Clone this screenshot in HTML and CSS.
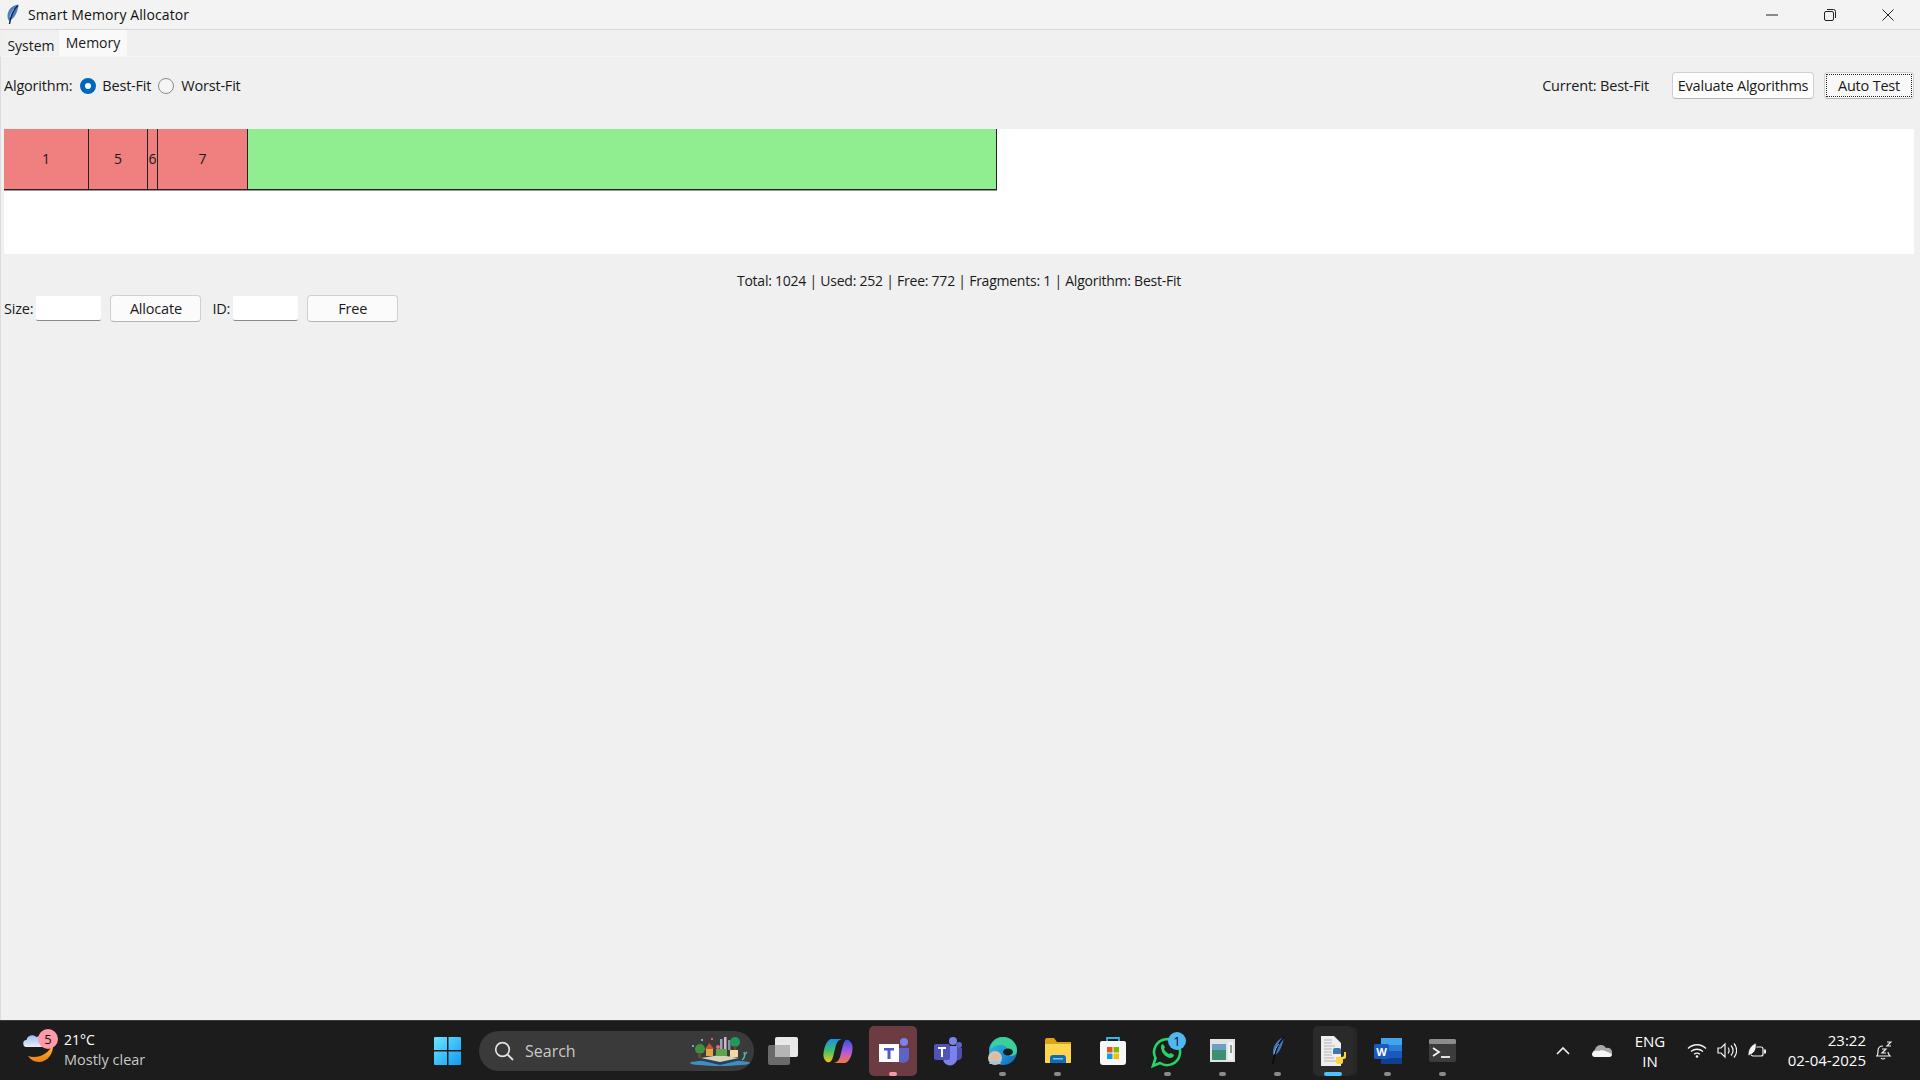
FILE: index.html
```html
<!DOCTYPE html>
<html lang="en">
<head>
  <meta charset="UTF-8" />
  <title>Smart Memory Allocator</title>
  <link rel="stylesheet" href="styles.css">
</head>
<body>

<!-- Title bar -->
<div class="titlebar">
  <svg class="app-icon" width="12" height="21" viewBox="0 0 12 21">
    <path d="M11.500 .5C5 1 .5 6 .5 12c0 2 .5 3.500 1.500 5C8 14.500 11 7 11.500 .5z" fill="#4a7fc0"/>
    <path d="M11 1.500C7 5 4 10 2.500 20" stroke="#1b2a44" stroke-width="1.500" fill="none"/>
    <path d="M7 5C5 7 3.500 10 3 13" stroke="#a7c4ea" stroke-width=".8" fill="none"/>
  </svg>
  <span class="title">Smart Memory Allocator</span>
  <div class="win-controls">
    <span class="win-btn">
      <svg width="12" height="12" viewBox="0 0 12 12"><path d="M0 6h12" stroke="#222" stroke-width="1"/></svg>
    </span>
    <span class="win-btn">
      <svg width="12" height="12" viewBox="0 0 12 12"><rect x=".5" y="2.500" width="9" height="9" rx="1.500" fill="none" stroke="#222"/><path d="M3 .5h6.500a2 2 0 0 1 2 2V9" fill="none" stroke="#222"/></svg>
    </span>
    <span class="win-btn">
      <svg width="12" height="12" viewBox="0 0 12 12"><path d="M.5.5l11 11M11.500.5l-11 11" stroke="#222" stroke-width="1"/></svg>
    </span>
  </div>
</div>

<!-- Tabs -->
<div class="tabs">
  <div class="tab">System</div>
  <div class="tab active">Memory</div>
</div>

<!-- Memory tab -->
<div class="pane">
  <div class="algo-row">
    <span>Algorithm:</span>
    <label class="radio-label"><input type="radio" name="algo" checked> Best-Fit</label>
    <label class="radio-label"><input type="radio" name="algo"> Worst-Fit</label>
    <span class="current">Current: Best-Fit</span>
    <button class="btn btn-eval">Evaluate Algorithms</button>
    <button class="btn btn-auto"><span class="focus-ring">Auto Test</span></button>
  </div>

  <div class="canvas">
    <div class="bars">
      <div class="block used" style="width:85px">1</div>
      <div class="block used" style="width:59px">5</div>
      <div class="block used" style="width:10px">6</div>
      <div class="block used" style="width:90px">7</div>
      <div class="block free" style="width:749px"></div>
    </div>
  </div>

  <div class="stats">Total: 1024 | Used: 252 | Free: 772 | Fragments: 1 | Algorithm: Best-Fit</div>

  <div class="alloc-row">
    <span>Size:</span>
    <input class="entry" type="text">
    <button class="btn btn-action">Allocate</button>
    <span class="id-label">ID:</span>
    <input class="entry" type="text">
    <button class="btn btn-action">Free</button>
  </div>
</div>

<!-- Taskbar -->
<div class="taskbar">
  <div class="weather">
    <svg class="weather-icon" width="44" height="44" viewBox="0 0 44 44">
      <defs>
        <linearGradient id="moon" x1="0" y1="0" x2="0" y2="1"><stop offset="0" stop-color="#fbc02d"/><stop offset="1" stop-color="#ee7d14"/></linearGradient>
        <linearGradient id="cloud" x1="0" y1="0" x2="0" y2="1"><stop offset="0" stop-color="#9dbcf0"/><stop offset="1" stop-color="#e8eefa"/></linearGradient>
      </defs>
      <path d="M30 15c1 10-6 18-14 18-5 0-9-3-11-6 9 3 20-1 25-12z" fill="url(#moon)"/>
      <path d="M4 18a3.500 3.500 0 0 1-.5-7 6 6 0 0 1 10-3 5 5 0 0 1 5.500 10z" fill="url(#cloud)"/>
      <circle cx="25" cy="10" r="10" fill="#ff9aa8"/>
      <text x="25" y="15" class="weather-count">5</text>
    </svg>
    <div class="weather-text">
      <div class="temp">21°C</div>
      <div class="cond">Mostly clear</div>
    </div>
  </div>

  <div class="task-btn">
    <svg width="30" height="30" viewBox="0 0 30 30">
      <defs><linearGradient id="win" x1="0" y1="0" x2="1" y2="1"><stop offset="0" stop-color="#6ee4ff"/><stop offset="1" stop-color="#0f9bf5"/></linearGradient></defs>
      <path d="M1 2a1 1 0 0 1 1-1h12v13H1zM15.500 1H27a1 1 0 0 1 1 1v12H15.500zM1 15.500h13V29H2a1 1 0 0 1-1-1zM15.500 15.500H28V28a1 1 0 0 1-1 1H15.500z" fill="url(#win)"/>
    </svg>
  </div>

  <div class="search">
    <svg width="20" height="20" viewBox="0 0 20 20"><circle cx="8.500" cy="8.500" r="6.800" fill="none" stroke="#e0e0e0" stroke-width="1.700"/><path d="M13.500 13.500l5.500 5.500" stroke="#e0e0e0" stroke-width="1.800"/></svg>
    <span class="search-text">Search</span>
    <svg class="search-art" width="62" height="32" viewBox="0 0 62 32">
      <ellipse cx="31" cy="28" rx="30" ry="3" fill="#3f8fc4"/>
      <path d="M10 25l21-4 21 4-21 5z" fill="#26405c"/>
      <path d="M12 23l19-3 19 3-19 4z" fill="#d8d2b8"/>
      <circle cx="11" cy="14" r="5" fill="#3e8f43"/>
      <rect x="9" y="18" width="3" height="5" fill="#6a4a2a"/>
      <rect x="17" y="13" width="7" height="8" fill="#e0a64b"/>
      <path d="M16 14l4.500-6 4.500 6z" fill="#c9552f"/>
      <rect x="31" y="4" width="2.500" height="11" fill="#a3a0b4"/>
      <rect x="35" y="2" width="2.500" height="13" fill="#c2c0cf"/>
      <rect x="39" y="5" width="2.500" height="10" fill="#8f8da3"/>
      <rect x="27" y="14" width="11" height="7" fill="#5fa34a"/>
      <circle cx="29" cy="12" r="2" fill="#e8667f"/>
      <circle cx="46" cy="7" r="5" fill="#1f9a5e"/>
      <rect x="45" y="11" width="2" height="5" fill="#6a4a2a"/>
      <rect x="41" y="15" width="8" height="7" fill="#ecd9a6"/>
      <circle cx="4" cy="11" r="1" fill="#7fd6e6"/>
      <circle cx="13" cy="5" r="1" fill="#7fd6e6"/>
      <circle cx="23" cy="4" r="1" fill="#e87f8f"/>
      <path d="M53 25c3-2 3-5 2-8M55 20l3-3" stroke="#49b8b0" stroke-width="1.500" fill="none"/>
    </svg>
  </div>

  <div class="task-btn">
    <svg width="32" height="30" viewBox="0 0 32 30"><rect x="1" y="9" width="22" height="20" rx="2" fill="#6a6a6a"/><rect x="8" y="1" width="23" height="20" rx="2" fill="#e8e8e8"/><rect x="8" y="9" width="15" height="12" fill="#b5b5b5"/></svg>
  </div>
  <div class="task-btn">
    <svg width="30" height="28" viewBox="0 0 30 28">
      <defs>
        <linearGradient id="cp1" x1="0" y1="0" x2="0" y2="1"><stop offset="0" stop-color="#1a8fe8"/><stop offset=".5" stop-color="#3fc06a"/><stop offset="1" stop-color="#f5c518"/></linearGradient>
        <linearGradient id="cp2" x1="0" y1="0" x2="0" y2="1"><stop offset="0" stop-color="#2f55e8"/><stop offset=".55" stop-color="#b95ad8"/><stop offset="1" stop-color="#f57a3a"/></linearGradient>
      </defs>
      <path d="M8 2h11c-3 .5-5 3-6 6l-3 12c-1 4-3 6-6 5-3-2-4-5-3.500-9C1.500 9 4 3 8 2z" fill="url(#cp1)"/>
      <path d="M22 26H11c3-.5 5-3 6-6l3-12c1-4 3-6 5.500-5 3 2 4.500 5 4 9C29 19 26 25 22 26z" fill="url(#cp2)"/>
    </svg>
  </div>
  <div class="task-btn highlight">
    <svg width="32" height="30" viewBox="0 0 32 30"><circle cx="27" cy="6" r="4" fill="#7b83eb"/><path d="M21 12h11v10a6 6 0 0 1-11 2z" fill="#5d63c7"/><rect x="2" y="8" width="20" height="18" fill="#fff"/><path d="M7 12h10v2.500h-3.500V23h-3v-8.500H7z" fill="#5059c9"/></svg>
    <span class="pin pink"></span>
  </div>
  <div class="task-btn">
    <svg width="30" height="30" viewBox="0 0 30 30"><circle cx="20" cy="5" r="4" fill="#7b83eb"/><circle cx="26" cy="9" r="3" fill="#5d63c7"/><path d="M22 12h7v9a5 5 0 0 1-7 3z" fill="#4a4fb0"/><path d="M9 10h15v12a7 7 0 0 1-14 1z" fill="#7b83eb"/><rect x="1" y="8" width="16" height="16" rx="2" fill="#4f55b8"/><path d="M5 11h8v2h-3v8H8v-8H5z" fill="#fff"/></svg>
  </div>
  <div class="task-btn">
    <svg width="30" height="30" viewBox="0 0 30 30">
      <defs><linearGradient id="edge" x1="0" y1="0" x2="1" y2="1"><stop offset="0" stop-color="#2fc4d8"/><stop offset=".6" stop-color="#1d8fd8"/><stop offset="1" stop-color="#0f5fb5"/></linearGradient></defs>
      <circle cx="15" cy="15" r="14" fill="url(#edge)"/>
      <path d="M15 1a14 14 0 0 1 14 14c0 3-3 5-7 5l-3-3c2-4-1-8-6-8-5 0-9 2-11 5C3 7 8 1 15 1z" fill="#3bcf9a"/>
      <ellipse cx="20" cy="16" rx="5" ry="3.500" fill="#1c1c1c"/>
      <circle cx="7" cy="22" r="7" fill="#cfc4b5"/><circle cx="7" cy="20" r="3" fill="#e6b999"/><path d="M1 28c1-4 11-4 12 0z" fill="#9fc6dd"/>
    </svg>
    <span class="pin"></span>
  </div>
  <div class="task-btn">
    <svg width="28" height="28" viewBox="0 0 28 28"><path d="M1 3a2 2 0 0 1 2-2h7l3 4h14v20a1 1 0 0 1-1 1H2a1 1 0 0 1-1-1z" fill="#dca312"/><path d="M1 7h26v18a1 1 0 0 1-1 1H2a1 1 0 0 1-1-1z" fill="#fdd54f"/><path d="M6 26v-5a3 3 0 0 1 3-3h10a3 3 0 0 1 3 3v5z" fill="#0f6cbd"/><rect x="9" y="21" width="10" height="1.500" fill="#7fc4f0"/></svg>
    <span class="pin"></span>
  </div>
  <div class="task-btn">
    <svg width="28" height="30" viewBox="0 0 28 30"><path d="M8 6V2h12v4" fill="none" stroke="#2fb6ee" stroke-width="1.800"/><path d="M1 7a2 2 0 0 1 2-2h22a2 2 0 0 1 2 2v19a3 3 0 0 1-3 3H4a3 3 0 0 1-3-3z" fill="#f7f7f7"/><rect x="8" y="11" width="5.500" height="5.500" fill="#f25022"/><rect x="14.500" y="11" width="5.500" height="5.500" fill="#7fba00"/><rect x="8" y="17.500" width="5.500" height="5.500" fill="#00a4ef"/><rect x="14.500" y="17.500" width="5.500" height="5.500" fill="#ffb900"/></svg>
  </div>
  <div class="task-btn">
    <svg width="40" height="38" viewBox="0 0 40 38"><path d="M5 34l2.500-8A13 13 0 1 1 12 31z" fill="none" stroke="#25d366" stroke-width="2.600"/><path d="M13 15c0-2 1-3 2-3l2 3-1 2c1 2 3 4 5 5l2-1 3 2c0 2-2 3-4 3-5-1-9-6-9-11z" fill="#25d366"/><circle cx="29" cy="9" r="9" fill="#4fb8f2"/><text x="29" y="14" class="wa-count">1</text></svg>
    <span class="pin"></span>
  </div>
  <div class="task-btn">
    <svg width="26" height="24" viewBox="0 0 26 24"><rect x="0" y="0" width="25" height="23" fill="#dfe3e3"/><rect x="2" y="5" width="14" height="16" fill="#3f8f73"/><rect x="2" y="5" width="14" height="6" fill="#6f9fc0"/><rect x="18" y="3" width="5" height="18" fill="#f1f4f4"/><rect x="20" y="6" width="2" height="8" fill="#8aa38f"/></svg>
    <span class="pin"></span>
  </div>
  <div class="task-btn">
    <svg width="16" height="30" viewBox="0 0 16 30"><path d="M14 1C8 3 3 9 3 16c0 2 .5 3 1 4 6-3 9-12 10-19z" fill="#3f74bf"/><path d="M14 1C9 7 5 13 3 28" stroke="#0c0c0c" stroke-width="1.600" fill="none"/><path d="M9 8C6 11 5 14 4 18" stroke="#a7c4ea" stroke-width=".8" fill="none"/></svg>
    <span class="pin"></span>
  </div>
  <div class="task-btn active-app">
    <svg width="28" height="32" viewBox="0 0 28 32"><path d="M2 1h13l7 7v23H2z" fill="#eeeeee"/><path d="M5 5h8M5 8h8M5 11h11M5 14h8M5 17h8M5 20h8M5 23h10M5 26h12" stroke="#b3b3b3" stroke-width="1"/><path d="M14 19v-4a2 2 0 0 1 2-2h4a2 2 0 0 1 2 2v4h-6z" fill="#3f78ae"/><path d="M27 17v5a2 2 0 0 1-2 2h-1v3a2 2 0 0 1-2 2h-3a2 2 0 0 1-2-2v-5h6a2 2 0 0 0 2-2v-3z" fill="#ffd43b"/></svg>
    <span class="pin blue"></span>
  </div>
  <div class="task-btn">
    <svg width="28" height="28" viewBox="0 0 28 28"><rect x="7" y="1" width="21" height="26" rx="1" fill="#2b7cd3"/><rect x="7" y="1" width="21" height="7" fill="#41a5ee"/><rect x="7" y="14" width="21" height="7" fill="#185abd"/><rect x="7" y="21" width="21" height="6" fill="#103f91"/><rect x="0" y="7" width="15" height="15" rx="1.500" fill="#185abd"/><text x="7.500" y="19" class="word-w">W</text></svg>
    <span class="pin"></span>
  </div>
  <div class="task-btn">
    <svg width="28" height="24" viewBox="0 0 28 24"><rect width="27" height="23" rx="2" fill="#3c3c3c"/><rect width="27" height="5" rx="1.500" fill="#8d8d8d"/><path d="M4 9l6 4-6 4" fill="none" stroke="#f2f2f2" stroke-width="1.800"/><path d="M12 18h9" stroke="#f2f2f2" stroke-width="1.800"/></svg>
    <span class="pin"></span>
  </div>

  <div class="tray">
    <svg class="tray-chevron" width="14" height="9" viewBox="0 0 14 9"><path d="M1 8l6-6 6 6" fill="none" stroke="#f0f0f0" stroke-width="1.600"/></svg>
    <svg class="tray-cloud" width="20" height="13" viewBox="0 0 20 13"><path d="M4 13a4 4 0 0 1-1-7.500 6 6 0 0 1 11-1.500 4.500 4.500 0 0 1 6 5c0 2-1 4-3 4z" fill="#a8a8a8"/><path d="M3 13c-2 0-3-1-3-3 0-2 3-4 7-3 3-2 8 1 13 3 0 2-1 3-3 3z" fill="#f4f4f4"/></svg>
    <div class="lang">ENG<br>IN</div>
    <svg class="tray-wifi" width="20" height="15" viewBox="0 0 20 15"><path d="M1 5.500c5-5 13-5 18 0M4 8.500c3.500-3 8.500-3 12 0M7 11.300c2-1.500 4-1.500 6 0" fill="none" stroke="#f5f5f5" stroke-width="1.300"/><circle cx="10" cy="13.500" r="1.300" fill="#f5f5f5"/></svg>
    <svg class="tray-vol" width="20" height="17" viewBox="0 0 20 17"><path d="M1 6h3l4-4v13l-4-4H1z" fill="none" stroke="#f0f0f0" stroke-width="1.200"/><path d="M11 5.500c1.500 2 1.500 4 0 6M14 3.500c2.500 3 2.500 7 0 10M17 1.500c3.500 4 3.500 10 0 14" fill="none" stroke="#f0f0f0" stroke-width="1.200"/></svg>
    <svg class="tray-batt" width="20" height="17" viewBox="0 0 20 17"><rect x="4" y="5" width="12" height="9" rx="2" fill="none" stroke="#f0f0f0" stroke-width="1.200"/><rect x="17" y="7.500" width="2" height="4" fill="#f0f0f0"/><path d="M1 14C1 7 4 3 9 1c1 5-1 10-6 12z" fill="#f5f5f5" stroke="#1c1c1c" stroke-width=".8"/></svg>
    <div class="clock">23:22<br>02-04-2025</div>
    <svg class="tray-bell" width="18" height="20" viewBox="0 0 18 20"><path d="M3 15c1-1 1-2 1-5 0-3 2-5 5-5M2 15h14c-1-1-2-2-2-4" fill="none" stroke="#f0f0f0" stroke-width="1.200"/><path d="M7 17c1 1.300 3 1.300 4 0" fill="none" stroke="#f0f0f0" stroke-width="1.200"/><path d="M8 8h4l-4 4h4M13 1h4l-4 4h4" fill="none" stroke="#f0f0f0" stroke-width="1.200"/></svg>
  </div>
</div>

</body>
</html>
```

FILE: styles.css
```css
html, body {
  margin: 0;
  padding: 0;
  height: 100%;
  overflow: hidden;
}

body {
  display: flex;
  flex-direction: column;
  font-family: 'Open Sans', 'Noto Sans', sans-serif;
  font-size: 14px;
  letter-spacing: -0.24px;
  color: #1a1a1a;
  background: #f0f0f0;
}

.titlebar {
  display: flex;
  align-items: center;
  height: 29px;
  flex: none;
  background: #f3f3f3;
  border-bottom: 1px solid #d6d6d6;
  padding-left: 7px;
}

.app-icon {
  margin-right: 9px;
}

.title {
  font-size: 14px;
  letter-spacing: 0.1px;
  color: #111;
}

.win-controls {
  display: flex;
  margin-left: auto;
  margin-right: 3px;
}

.win-btn {
  display: flex;
  align-items: center;
  justify-content: center;
  width: 58px;
  height: 27px;
}

.tabs {
  display: flex;
  align-items: flex-end;
  flex: none;
  height: 27px;
  padding-left: 4px;
  background: #f0f0f0;
  font-size: 14px;
  letter-spacing: 0;
}

.tab {
  display: flex;
  align-items: center;
  justify-content: center;
  width: 54px;
  height: 24px;
  margin-right: 1px;
  background: #f1f1f1;
}

.tab.active {
  width: 68px;
  height: 27px;
  padding-bottom: 3px;
  box-sizing: border-box;
  background: #f9f9f9;
}

.pane {
  flex: 1;
  padding: 0 6px 0 3px;
  background: #f0f0f0;
  border-top: 1px solid #f5f5f5;
  border-left: 1px solid #dcdcdc;
  margin-top: -1px;
}

.algo-row, .alloc-row {
  display: flex;
  align-items: center;
  font-size: 14.5px;
  letter-spacing: -0.2px;
}

.algo-row {
  height: 57px;
  box-sizing: border-box;
  margin-bottom: 15px;
}

.radio-label {
  display: flex;
  align-items: center;
  gap: 6px;
  margin-left: 8px;
}

.radio-label + .radio-label {
  gap: 7px;
  margin-left: 7px;
}

.radio-label input {
  appearance: none;
  width: 16px;
  height: 16px;
  margin: 0;
  border-radius: 50%;
  border: 1px solid #8a8a8a;
  background: #f5f5f5;
}

.radio-label input:checked {
  border: 5px solid #0067c0;
  background: #fff;
}

.current {
  margin-left: auto;
  margin-right: 23px;
}

.btn {
  font: inherit;
  letter-spacing: inherit;
  color: inherit;
  height: 27px;
  background: #fdfdfd;
  border: 1px solid #d0d0d0;
  border-bottom-color: #b5b5b5;
  border-radius: 4px;
  padding: 0;
}

.btn-eval {
  width: 142px;
  margin-right: 10px;
}

.btn-auto {
  width: 90px;
  padding: 1px;
  background: #f8f8f8;
}

.focus-ring {
  display: flex;
  align-items: center;
  justify-content: center;
  height: 100%;
  box-sizing: border-box;
  border: 1px dotted #222;
}

.canvas {
  height: 125px;
  background: #fff;
  overflow: hidden;
}

.bars {
  display: flex;
  height: 61px;
}

.block {
  box-sizing: border-box;
  display: flex;
  align-items: center;
  justify-content: center;
  padding-bottom: 2px;
  border-right: 1px solid #222;
  border-bottom: 1px solid #222;
  box-shadow: 0 1px 0 #9a9a9a;
}

.used {
  background: #f08080;
}

.free {
  background: #90ee90;
}

.stats {
  height: 28px;
  margin-top: 13px;
  line-height: 27px;
  text-align: center;
}

.alloc-row {
  height: 27px;
}

.entry {
  box-sizing: border-box;
  width: 65px;
  height: 25px;
  margin: 0 9px 0 3px;
  border: none;
  border-bottom: 1px solid #8a8a8a;
  background: #fff;
  border-radius: 2px;
}

.btn-action {
  width: 91px;
  background: #fbfbfb;
}

.id-label {
  margin-left: 11px;
}

/* taskbar */
.taskbar {
  display: flex;
  align-items: center;
  flex: none;
  height: 60px;
  box-sizing: border-box;
  background: #1c1c1c;
  border-top: 1px solid #3a3a3a;
  color: #fff;
  letter-spacing: 0;
}

.weather {
  display: flex;
  align-items: center;
  width: 420px;
  padding-left: 23px;
  box-sizing: border-box;
}

.weather-icon {
  margin-right: -3px;
}

.weather-text {
  margin-top: -2px;
}

.weather-count, .wa-count {
  font-size: 13px;
  text-anchor: middle;
  fill: #111;
}

.temp {
  font-size: 14px;
  line-height: 20px;
}

.cond {
  font-size: 14.5px;
  line-height: 20px;
  color: #c8c8c8;
}

.task-btn {
  position: relative;
  display: flex;
  align-items: center;
  justify-content: center;
  width: 55px;
  height: 50px;
  flex: none;
}

.task-btn.highlight {
  background: #6d3b42;
  width: 48px;
  margin: 0 3.5px;
  border-radius: 5px;
}

.task-btn.active-app {
  background: #2a2a2a;
  width: 40px;
  margin: 0 7.5px;
  border-radius: 5px;
  box-shadow: 5px 0 0 -1px #262626;
}

.pin {
  position: absolute;
  left: 50%;
  bottom: 0;
  width: 7px;
  height: 4px;
  margin-left: -3.5px;
  border-radius: 2px;
  background: #8a8a8a;
}

.pin.pink {
  width: 8px;
  background: #f59aa8;
}

.pin.blue {
  width: 18px;
  margin-left: -9px;
  background: #4cc2ff;
}

.word-w {
  font-size: 11px;
  font-weight: 700;
  text-anchor: middle;
  fill: #fff;
}

.search {
  display: flex;
  align-items: center;
  width: 275px;
  height: 40px;
  margin: 0 1px 0 4px;
  padding: 0 0 0 15px;
  box-sizing: border-box;
  flex: none;
  border-radius: 20px;
  background: #3a3a3a;
}

.search-text {
  margin-left: 11px;
  font-size: 16px;
  color: #c8c8c8;
}

.search-art {
  margin-left: auto;
  margin-right: 3px;
}

.tray {
  display: flex;
  align-items: center;
  flex: 1;
  padding-left: 86px;
}

.tray-cloud {
  margin-left: 22px;
}

.lang {
  width: 60px;
  margin-left: 8px;
  text-align: center;
  font-size: 15px;
  line-height: 20px;
}

.tray-wifi {
  margin-left: 7px;
}

.tray-vol {
  margin-left: 10px;
}

.tray-batt {
  margin-left: 10px;
}

.clock {
  width: 88px;
  margin: -2px 0 0 11px;
  text-align: right;
  font-size: 15px;
  line-height: 20px;
}

.tray-bell {
  margin-left: 8px;
}
```
